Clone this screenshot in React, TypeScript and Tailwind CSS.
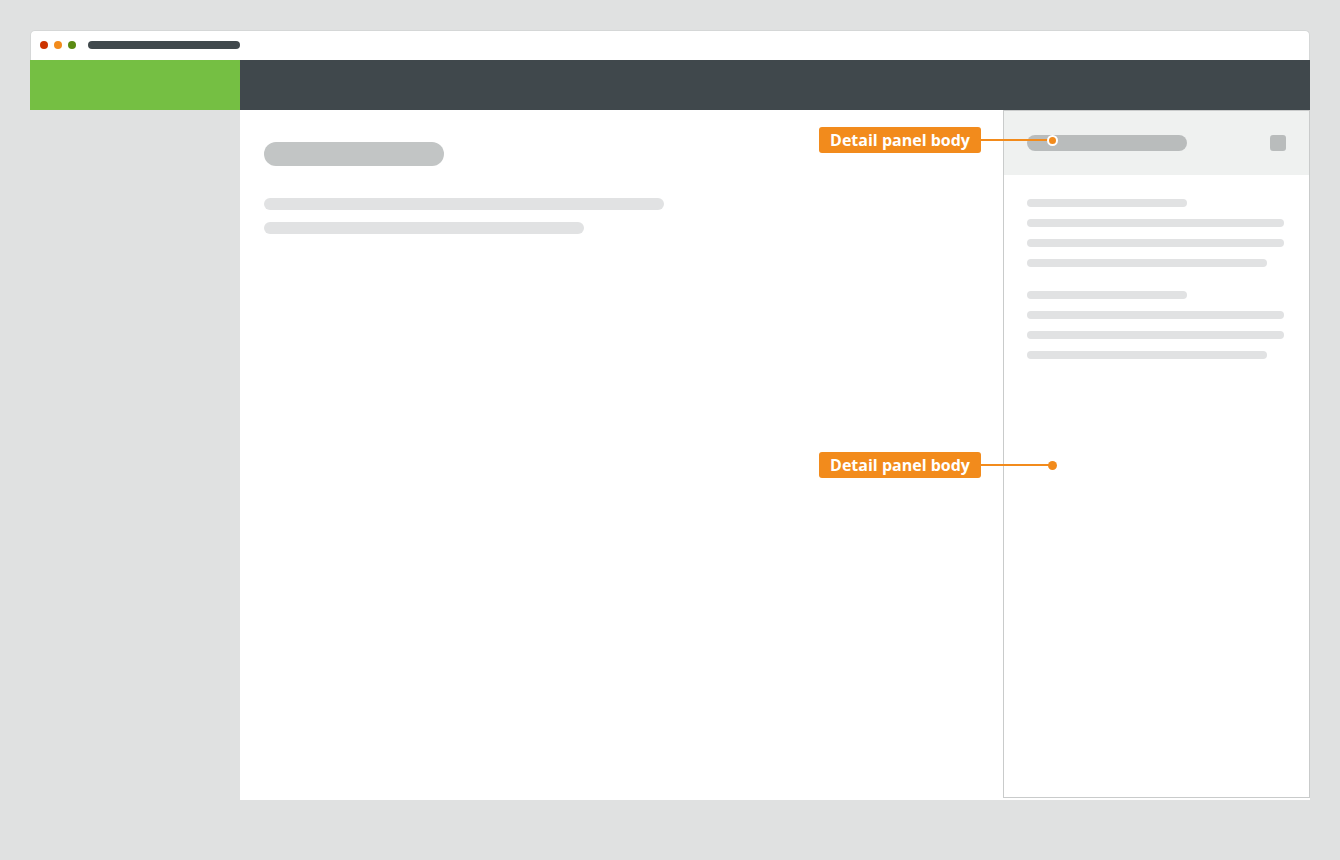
const annotations = [
  { top: 17, ring: true },
  { top: 342, ring: false },
];

function Callout({ top, ring }: { top: number; ring: boolean }) {
  return (
    <div
      className="pointer-events-none absolute left-[789px] flex items-center"
      style={{ top }}
    >
      <span className="flex h-[26px] w-[162px] items-center justify-center rounded-[3px] bg-[#f28b1c] font-['Open_Sans',sans-serif] text-[16px] font-bold text-white">
        Detail panel body
      </span>
      <span className="h-[2px] w-[68px] bg-[#f28b1c]" />
      <span
        className={
          ring
            ? "-ml-[2px] h-[11px] w-[11px] rounded-full border-2 border-white bg-[#f28b1c]"
            : "-ml-[1px] h-[9px] w-[9px] rounded-full bg-[#f28b1c]"
        }
      />
    </div>
  );
}

function Line({ w }: { w: string }) {
  return <div className={`h-2 rounded-full bg-[#e1e2e3] ${w}`} />;
}

function DetailPanel() {
  return (
    <aside className="flex h-[688px] w-[307px] flex-col border border-[#c9cbcb] bg-white">
      <div className="flex h-[64px] items-center justify-between bg-[#eff1f0] px-[23px]">
        <div className="h-4 w-40 rounded-full bg-[#b9bcbc]" />
        <div className="h-4 w-4 rounded-[3px] bg-[#b9bcbc]" />
      </div>
      <div className="flex flex-col gap-6 px-[23px] pt-6">
        <div className="flex flex-col gap-3">
          <Line w="w-40" />
          <Line w="w-[257px]" />
          <Line w="w-[257px]" />
          <Line w="w-[240px]" />
        </div>
        <div className="flex flex-col gap-3">
          <Line w="w-40" />
          <Line w="w-[257px]" />
          <Line w="w-[257px]" />
          <Line w="w-[240px]" />
        </div>
      </div>
    </aside>
  );
}

export default function App() {
  return (
    <div className="h-[860px] bg-[#e0e1e1] px-[30px] pt-[30px]">
      <div className="relative w-[1280px]">
        <header className="flex h-[30px] items-center gap-3 rounded-t-[5px] border-x border-t border-[#d5d7d7] bg-white pb-[2px] pl-[9px]">
          <div className="flex gap-[6px]">
            <span className="h-2 w-2 rounded-full bg-[#cc3300]" />
            <span className="h-2 w-2 rounded-full bg-[#f28b1c]" />
            <span className="h-2 w-2 rounded-full bg-[#5a8a12]" />
          </div>
          <div className="h-2 w-[152px] rounded-full bg-[#40484c]" />
        </header>
        <nav className="flex h-[50px]">
          <div className="w-[210px] bg-[#75bf43]" />
          <div className="flex-1 bg-[#40484c]" />
        </nav>
        <div className="flex h-[690px]">
          <div className="w-[210px]" />
          <main className="flex flex-1 items-start bg-white">
            <section className="flex flex-1 flex-col pl-6 pt-8">
              <div className="h-6 w-[180px] rounded-full bg-[#c2c5c5]" />
              <div className="mt-8 h-3 w-[400px] rounded-full bg-[#e1e2e3]" />
              <div className="mt-3 h-3 w-[320px] rounded-full bg-[#e1e2e3]" />
            </section>
            <DetailPanel />
          </main>
        </div>
        {annotations.map((a) => (
          <Callout key={a.top} top={a.top + 80} ring={a.ring} />
        ))}
      </div>
    </div>
  );
}
